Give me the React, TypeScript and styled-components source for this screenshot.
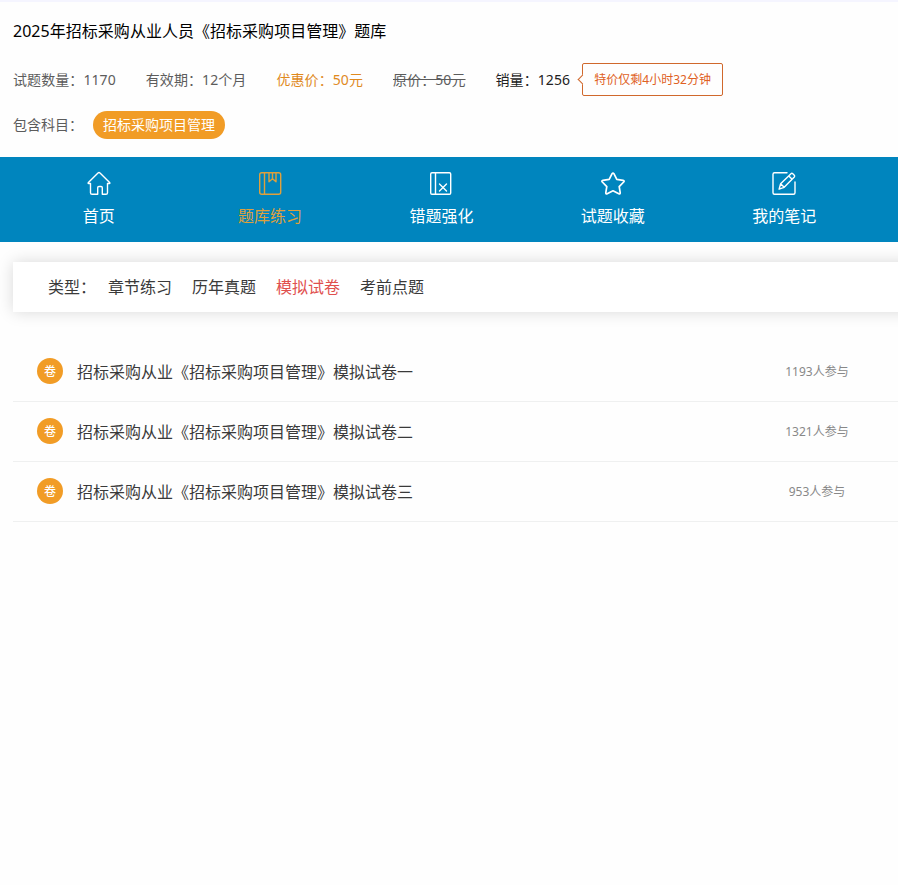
import React from "react";
import styled, { createGlobalStyle, css } from "styled-components";

const GlobalStyle = createGlobalStyle`
  * { box-sizing: border-box; }
  body {
    margin: 0;
    background: #fefefe;
    color: #3a3a3a;
    font-family: "Noto Sans", "Noto Sans CJK SC", sans-serif;
    font-size: 14px;
    overflow: hidden;
  }
`;

const Page = styled.div`
  min-height: 885px;
  border-top: 2px solid #f5f5ff;
  overflow: hidden;
`;

const Header = styled.header`
  height: 155px;
  padding: 17px 13px 0;
`;

const Title = styled.h1`
  margin: 0;
  font-size: 16px;
  font-weight: 400;
  line-height: 24px;
  letter-spacing: 0.03px;
  color: #000;
`;

const Facts = styled.div`
  display: flex;
  align-items: center;
  gap: 30px;
  height: 33px;
  margin-top: 20px;
  white-space: nowrap;
`;

type FactTone = "normal" | "price" | "old" | "sales";

const factTones = {
  normal: css`color: #5c5c5c;`,
  price: css`color: #e08a1e;`,
  old: css`color: #5c5c5c; text-decoration: line-through;`,
  sales: css`color: #222;`,
};

const Fact = styled.span<{ $tone: FactTone }>`
  line-height: 20px;
  letter-spacing: 0.08px;
  ${(p) => factTones[p.$tone]}
`;

const Offer = styled.div`
  position: relative;
  width: 141px;
  height: 33px;
  margin-left: -18px;
  border: 1px solid #d0682c;
  border-radius: 2px;
  color: #df6023;
  font-size: 12px;
  line-height: 31px;
  text-align: center;

  &::before {
    content: "";
    position: absolute;
    left: -4px;
    top: 12px;
    width: 6px;
    height: 6px;
    background: #fefefe;
    border-left: 1px solid #d0682c;
    border-bottom: 1px solid #d0682c;
    transform: rotate(45deg);
  }
`;

const Subjects = styled.div`
  display: flex;
  align-items: center;
  margin-top: 15px;
  color: #5c5c5c;
  line-height: 28px;
`;

const SubjectTag = styled.span`
  margin-left: 10px;
  padding: 0 10px;
  height: 28px;
  border-radius: 14px;
  background: #f19c26;
  color: #fff;
`;

const Nav = styled.nav`
  display: flex;
  height: 85px;
  padding-left: 13px;
  background: #0085be;
`;

const NavItem = styled.a<{ $active?: boolean }>`
  display: flex;
  flex-direction: column;
  align-items: center;
  flex: 0 0 171.4px;
  padding-top: 13px;
  color: ${(p) => (p.$active ? "#dfa03c" : "#fff")};
  font-size: 16px;
  line-height: 24px;
`;

const NavIcon = styled.svg`
  width: 26px;
  height: 26px;
  margin-bottom: 8px;
  fill: none;
  stroke: currentColor;
  stroke-width: 1.4;
  stroke-linecap: round;
  stroke-linejoin: round;
`;

const Filters = styled.div`
  display: flex;
  align-items: center;
  height: 50px;
  margin: 20px -20px 0 13px;
  padding-left: 35px;
  background: #fff;
  box-shadow: 0 0 15px rgba(0, 0, 0, 0.15);
  font-size: 16px;
  line-height: 24px;
`;

const FilterLabel = styled.span`
  width: 60px;
`;

const FilterOption = styled.a<{ $active?: boolean }>`
  margin-right: 20px;
  color: ${(p) => (p.$active ? "#e0504e" : "#3a3a3a")};
`;

const PaperList = styled.ul`
  margin: 30px 0 0 13px;
  padding: 0;
  list-style: none;
`;

const Paper = styled.li`
  display: flex;
  align-items: center;
  height: 60px;
  padding-left: 24px;
  border-bottom: 1px solid #eff0f0;
`;

const PaperBadge = styled.span`
  width: 26px;
  height: 26px;
  margin-bottom: 2px;
  border-radius: 50%;
  background: #f19c26;
  color: #fff;
  font-size: 12px;
  font-weight: 500;
  line-height: 27px;
  text-align: center;
`;

const PaperName = styled.span`
  flex: 1;
  margin-left: 14px;
  font-size: 16px;
  line-height: 24px;
`;

const PaperCount = styled.span`
  width: 162px;
  color: #888;
  font-size: 12px;
  line-height: 18px;
  text-align: center;
`;

const facts: { text: string; tone: FactTone }[] = [
  { text: "试题数量：1170", tone: "normal" },
  { text: "有效期：12个月", tone: "normal" },
  { text: "优惠价：50元", tone: "price" },
  { text: "原价：50元", tone: "old" },
  { text: "销量：1256", tone: "sales" },
];

const navItems = [
  {
    label: "首页",
    icon: <path d="M4.5 13.5H2.7q-1-.1-.3-1L12 2.9q1-.9 2 0l9.6 9.6q.7.9-.3 1h-1.8v9.2q0 1.6-1.6 1.6h-3.6v-6.6q0-1.2-1.2-1.2h-2.2q-1.2 0-1.2 1.2v6.6H6.1q-1.6 0-1.6-1.6z" />,
  },
  {
    label: "题库练习",
    active: true,
    icon: (
      <>
        <rect x="2.7" y="2.7" width="21" height="21.6" rx="2" />
        <path d="M7.5 2.7v21.6M12 2.7v9l3.5-3 3.5 3v-9M15.5 2.7v6" />
      </>
    ),
  },
  {
    label: "错题强化",
    icon: (
      <>
        <rect x="2.7" y="2.7" width="20" height="21.6" rx="1.3" />
        <path d="M7.5 2.7v21.6M11.5 14l7 7M18.5 14l-7 7" />
      </>
    ),
  },
  {
    label: "试题收藏",
    icon: <path strokeWidth="1.7" d="M12.1 3.7q.9-1.4 1.8 0l2.9 5.7 6.3.9q1.7.4.6 1.7l-4.5 4.7 1 6q.1 1.6-1.4 1L13 20.8l-5.8 2.9q-1.5.6-1.4-1l1-6L2.3 12q-1.1-1.3.6-1.7l6.3-.9z" />,
  },
  {
    label: "我的笔记",
    icon: (
      <>
        <path d="M16 2.7H3.5Q2 2.7 2 4.2v18.6q0 1.5 1.5 1.5h19q1.5 0 1.5-1.5V12" />
        <path d="M8.1 19.2l1.5-5.4L20 3.7q.9-.8 1.8 0l1.5 1.5q.8.9 0 1.8L13.2 17.3zM17.8 5.9l3.3 3.3M9.6 13.8l3.6 3.5" />
      </>
    ),
  },
];

const filters = ["章节练习", "历年真题", "模拟试卷", "考前点题"];

const papers = [
  { name: "招标采购从业《招标采购项目管理》模拟试卷一", count: 1193 },
  { name: "招标采购从业《招标采购项目管理》模拟试卷二", count: 1321 },
  { name: "招标采购从业《招标采购项目管理》模拟试卷三", count: 953 },
];

export default function App() {
  return (
    <Page lang="zh-CN">
      <GlobalStyle />
      <Header>
        <Title>2025年招标采购从业人员《招标采购项目管理》题库</Title>
        <Facts>
          {facts.map((f) => (
            <Fact key={f.text} $tone={f.tone}>{f.text}</Fact>
          ))}
          <Offer>特价仅剩4小时32分钟</Offer>
        </Facts>
        <Subjects>
          包含科目：
          <SubjectTag>招标采购项目管理</SubjectTag>
        </Subjects>
      </Header>
      <Nav>
        {navItems.map((item) => (
          <NavItem key={item.label} $active={item.active}>
            <NavIcon viewBox="0 0 26 26">{item.icon}</NavIcon>
            {item.label}
          </NavItem>
        ))}
      </Nav>
      <Filters>
        <FilterLabel>类型：</FilterLabel>
        {filters.map((label) => (
          <FilterOption key={label} $active={label === "模拟试卷"}>{label}</FilterOption>
        ))}
      </Filters>
      <PaperList>
        {papers.map((paper) => (
          <Paper key={paper.name}>
            <PaperBadge>卷</PaperBadge>
            <PaperName>{paper.name}</PaperName>
            <PaperCount>{paper.count}人参与</PaperCount>
          </Paper>
        ))}
      </PaperList>
    </Page>
  );
}
